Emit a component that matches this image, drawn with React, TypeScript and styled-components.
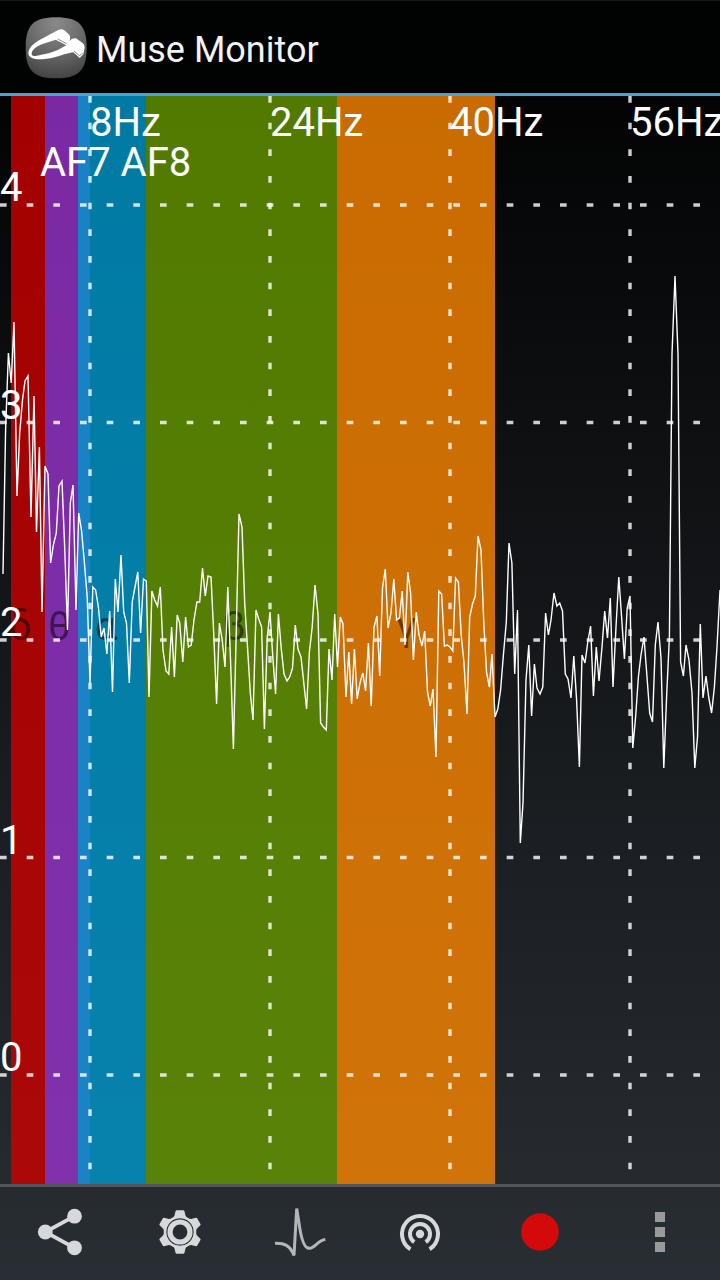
import React from 'react';
import styled, { createGlobalStyle } from 'styled-components';

const GlobalStyle = createGlobalStyle`
  * { box-sizing: border-box; }
  html, body { margin: 0; padding: 0; background: #000; }
  body { font-family: Roboto, "Liberation Sans", sans-serif; }
`;

const Page = styled.div`
  display: flex;
  flex-direction: column;
  min-height: 100vh;
  background: linear-gradient(#000000, #292e34);
`;

const Header = styled.header`
  display: flex;
  align-items: center;
  gap: 9px;
  height: 96px;
  padding: 2px 25px 0;
  background: #010202;
  border-top: 1px solid #161819;
  border-bottom: 3px solid #3ba9d6;
`;

const Title = styled.h1`
  margin: 0;
  padding-top: 4px;
  color: #f3f3f3;
  font-size: 36px;
  font-weight: 400;
  line-height: 44px;
`;

const Main = styled.main`
  flex: 1;
`;

const Spectrum = styled.svg`
  display: block;
  width: 100%;
  height: auto;
`;

const Band = styled.rect<{ $color: string }>`
  fill: ${(p) => p.$color};
  fill-opacity: 0.8;
`;

const GridLine = styled.line`
  stroke: rgba(255, 255, 255, 0.8);
  stroke-width: 3.4;
  stroke-dasharray: 6.667 20;
`;

const Label = styled.text`
  fill: #fff;
  font-size: 40px;
`;

const BandName = styled.text`
  fill: #000;
  fill-opacity: 0.5;
  font-size: 40px;
`;

const Trace = styled.polyline`
  fill: none;
  stroke: #fff;
  stroke-width: 1.4;
  stroke-linejoin: miter;
`;

const Toolbar = styled.nav`
  display: grid;
  grid-template-columns: repeat(6, 1fr);
  height: 96px;
  border-top: 3px solid #50565a;
`;

const ToolButton = styled.button`
  display: flex;
  justify-content: center;
  padding: 13px 0 16px;
  border: 0;
  background: none;
  color: #d6d8da;
  cursor: pointer;
`;

const bands = [
  { name: 'δ', color: '#cc0000', from: 11, to: 45, x: 9 },
  { name: 'θ', color: '#9933cc', from: 45, to: 90, x: 48 },
  { name: 'α', color: '#0099cc', from: 78, to: 146, x: 95 },
  { name: 'β', color: '#669900', from: 146, to: 337, x: 222 },
  { name: 'γ', color: '#fb8600', from: 337, to: 495, x: 396 },
];

const levels = [
  { value: 4, y: 205 },
  { value: 3, y: 422.5 },
  { value: 2, y: 640 },
  { value: 1, y: 857.5 },
  { value: 0, y: 1075 },
];

const frequencies = [
  { label: '8Hz', x: 90 },
  { label: '24Hz', x: 270 },
  { label: '40Hz', x: 450 },
  { label: '56Hz', x: 630 },
];

const samples = `
3,574 5.6,430 8.4,353 11.2,383 14,322 17,496 19.7,433 22.5,400 25,381 28,376 31,517 34,396 36.5,532 39.4,447
42,612 45,466 48,474 50.6,563 53.4,545 56.3,533 59,486 62,481 64.7,548 67.5,630 70.3,503 73,485 76,610 78.7,513
81.6,531 84.4,563 87.2,597 90,683 92.8,587 95.6,590 98.4,607 101.2,637 104,628 106.9,654 109.7,611 112.5,692
115.3,579 118,612 121,555 123.7,612 126.5,623 129.3,683 132.2,602 135,587 137.8,572 140.6,633 143.5,579 146.3,581
149,697 151.9,591 154.7,600 157.5,606 160.3,587 163,650 166,671 168.8,674 171.6,627 174.4,677 177.2,615 179.7,623
182.8,662 185.6,617 188.4,647 191.2,645 194,620 196.9,602 199.7,602 202.5,568 205.3,596 208,576 211,577 213.7,633
216.6,704 219.4,623 222.2,640 225,667 227.8,587 230.6,662 233.4,749 236.3,630 239,514 242,527 244.7,603 247.5,647
250.3,693 253,720 256,610 258.7,619 261.6,627 264.4,729 267.2,638 270,612 272.8,657 275.6,694 278.4,614 281.2,648
284,674 287,681 289.7,677 292.5,668 295.3,625 298,649 301,657 303.7,682 306.6,709 309.4,652 312.2,627 315,585
318,614 320.6,723 323.4,727 326.3,730 329,649 332,680 334.7,614 337.5,667 340.3,617 343,624 346,697 348.8,652
351.6,704 354.4,649 357.2,699 360,683 362.8,673 365.6,691 368.4,643 371.2,706 374,627 376.9,616 379.7,676 382.5,588
385.3,569 388,628 391,613 393.8,579 396.6,620 399.4,618 402.2,591 405,645 407.8,572 410.6,593 413.4,660 416.3,612
419,635 422,646 424.7,631 427.5,692 430.3,706 433,689 436,757 438.8,591 441.6,594 444.4,646 447.2,645 450,647
452.8,651 455.6,578 458.4,582 461.2,635 464,663 467,714 469.7,617 472.5,604 475.3,596 478,536 481,550 483.8,623
486.6,673 489.4,687 492,654 495,717 497.8,709 500.6,690 503.4,655 506.3,622 509,543 511.9,563 514.7,674 517.5,610
520.3,843 523,803 526,680 528.8,645 531.6,716 534.4,664 537,688 540,694 542.8,687 545.6,613 548.4,635 551,620
554,593 556.9,606 559.7,603 562.5,611 565.3,674 568,679 571,698 573.8,656 576.6,700 579.4,767 582,655 585,663
587.8,642 590.6,626 593.4,696 596.3,647 599,681 602,647 604.7,611 607.5,638 610.3,598 613,687 616,627 618.8,577
621.6,617 624.4,659 627.2,608 630,596 632.8,748 635.6,717 638.4,677 641,655 644,637 647,677 649.7,713 652.5,722
655.3,645 658,622 661,658 663.8,768 666.6,697 669.4,637 672,354 675,276 678,354 680.6,662 683.4,676 686,645
689,660 692,693 694.8,768 697.5,737 700.3,624 703,698 706,676 708.8,698 711.6,713 714.4,687 717,647 720,590`;

const Icon = ({ children }: { children: React.ReactNode }) => (
  <svg width="64" height="64" viewBox="0 0 64 64" aria-hidden="true">
    {children}
  </svg>
);

const AppLogo = () => (
  <svg width="62" height="62" viewBox="15 14 186 186" aria-hidden="true">
    <defs>
      <radialGradient id="logoShade" cx="0.5" cy="0.1" r="0.95">
        <stop offset="0" stopColor="#8a8a8a" />
        <stop offset="0.6" stopColor="#626262" />
        <stop offset="1" stopColor="#404040" />
      </radialGradient>
    </defs>
    <path
      fill="url(#logoShade)"
      d="M108 15C176 15 200 39 200 106S176 198 108 198 17 173 17 106 40 15 108 15Z"
    />
    <path
      fill="#fff"
      fillRule="evenodd"
      d="M25 122C26 105 42 92 60 82L116 52Q125 48 133 54L148 67Q153 76 148 88Q154 77 168 78L188 92Q195 98 194 106L190 126L179 137L160 120C138 122 108 137 80 139C55 143 26 142 25 122ZM35 124C36 111 52 101 68 95L105 83Q112 81 118 87L139 99L124 107C100 122 70 126 50 130C40 132 35 130 35 124Z"
    />
    <path fill="none" stroke="#fff" strokeWidth="3" d="M109 82L138 96" />
    <path fill="none" stroke="#555" strokeWidth="2" d="M113 80L140 94M162 116L178 130L188 123" />
  </svg>
);

const ShareIcon = () => (
  <Icon>
    <path d="M46.5 16.2L17.3 32L46.5 47.8" fill="none" stroke="currentColor" strokeWidth="3.8" />
    <g fill="currentColor">
      <circle cx="17.3" cy="32" r="7.4" />
      <circle cx="46.5" cy="16.2" r="7.4" />
      <circle cx="46.5" cy="47.8" r="7.4" />
    </g>
  </Icon>
);

const GearIcon = () => (
  <Icon>
    <circle cx="32" cy="32" r="14.9" fill="none" stroke="currentColor" strokeWidth="2.4" />
    <g fill="currentColor">
      {[0, 60, 120, 180, 240, 300].map((angle) => (
        <path
          key={angle}
          transform={`rotate(${angle} 32 32)`}
          d="M28.4 10.3H35.6L36.4 11L37.6 15.8Q38.2 17 40 18L38 19.4A13.9 13.9 0 0 0 26 19.4L24 18Q25.8 17 26.4 15.8L27.6 11Z"
        />
      ))}
    </g>
    <circle cx="32" cy="32" r="10" fill="none" stroke="currentColor" strokeWidth="5.2" />
  </Icon>
);

const PulseIcon = () => (
  <Icon>
    <path
      d="M7 43.3C16 43 22 45 26 55.5L28.7 8.5L31 23C33 38 36 48.3 41 48.3C47 48.3 50 40 57.3 39.5"
      fill="none"
      stroke="#b4b6b8"
      strokeWidth="3"
      strokeLinejoin="bevel"
    />
  </Icon>
);

const BroadcastIcon = () => (
  <Icon>
    <g fill="none" stroke="currentColor" strokeWidth="4">
      <path d="M22.4 49.2A18 18 0 1 1 41.6 49.2" />
      <path d="M26.3 42.2A10 10 0 1 1 37.7 42.2" />
    </g>
    <circle cx="32" cy="34" r="4.2" fill="currentColor" />
  </Icon>
);

const RecordIcon = () => (
  <Icon>
    <circle cx="32" cy="32" r="18.8" fill="#d40a0a" />
  </Icon>
);

const MoreIcon = () => (
  <Icon>
    <path d="M27 12h10v10h-10zM27 27h10v10h-10zM27 42h10v10h-10z" fill="#989a9c" />
  </Icon>
);

const tools = [
  { label: 'Share', Glyph: ShareIcon },
  { label: 'Settings', Glyph: GearIcon },
  { label: 'Waveform', Glyph: PulseIcon },
  { label: 'Stream', Glyph: BroadcastIcon },
  { label: 'Record', Glyph: RecordIcon },
  { label: 'More', Glyph: MoreIcon },
];

export default function App() {
  return (
    <>
      <GlobalStyle />
      <Page>
        <Header>
          <AppLogo />
          <Title>Muse Monitor</Title>
        </Header>
        <Main>
          <Spectrum viewBox="0 96 720 1088" role="img" aria-label="Frequency spectrum">
            {bands.map((b) => (
              <Band key={b.name} $color={b.color} x={b.from} y={96} width={b.to - b.from} height={1088} />
            ))}
            {bands.map((b) => (
              <BandName key={b.name} x={b.x} y={640}>{b.name}</BandName>
            ))}
            {levels.map((l) => (
              <GridLine key={l.value} x1={0} x2={720} y1={l.y} y2={l.y} />
            ))}
            {frequencies.map((f) => (
              <GridLine key={f.label} x1={f.x} x2={f.x} y1={96} y2={1184} />
            ))}
            <Trace points={samples} />
            {levels.map((l) => (
              <Label key={l.value} x={0} y={l.y - 4}>{l.value}</Label>
            ))}
            {frequencies.map((f) => (
              <Label key={f.label} x={f.x} y={136}>{f.label}</Label>
            ))}
            <Label x={40} y={176}>AF7 AF8</Label>
          </Spectrum>
        </Main>
        <Toolbar>
          {tools.map(({ label, Glyph }) => (
            <ToolButton key={label} type="button" aria-label={label}>
              <Glyph />
            </ToolButton>
          ))}
        </Toolbar>
      </Page>
    </>
  );
}
